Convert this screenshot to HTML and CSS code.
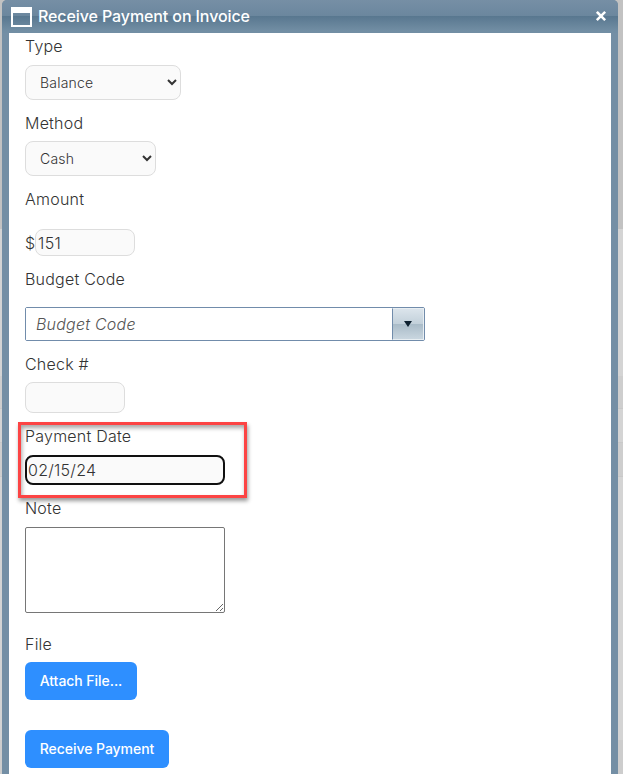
FILE: index.html
```html
<!DOCTYPE html>
<html lang="en">
<head>
<meta charset="utf-8">
<title>Receive Payment on Invoice</title>
<link rel="stylesheet" href="styles.css">
</head>
<body>
<div class="window">
  <header class="titlebar">
    <svg class="window-icon" width="21" height="20" viewBox="0 0 21 20"><path fill="#fff" fill-rule="evenodd" d="M0 0h21v20H0zM2 6v12h17V6z"/></svg>
    <h1 class="title">Receive Payment on Invoice</h1>
    <svg class="close" width="12" height="12" viewBox="0 0 12 12"><path d="M2.7 2.7l6.6 6.6M9.3 2.7L2.7 9.3" stroke="#fff" stroke-width="2.5" stroke-linecap="square"/></svg>
  </header>
  <form class="content">
    <div class="field type"><label>Type</label><select class="select wide"><option>Balance</option></select></div>
    <div class="field method"><label>Method</label><select class="select"><option>Cash</option></select></div>
    <div class="field amount"><label>Amount</label><div class="money"><span>$</span><input class="input" value="151"></div></div>
    <div class="field budget"><label>Budget Code</label>
      <div class="combo"><input class="combo-input" placeholder="Budget Code"><span class="combo-button"><svg width="8" height="6" viewBox="0 0 8 6"><path d="M0 0h8L4 6z" fill="#0d2030"/></svg></span></div>
    </div>
    <div class="field check"><label>Check #</label><input class="input"></div>
    <div class="field date"><label>Payment Date</label><input class="input focused" value="02/15/24"><div class="highlight"></div></div>
    <div class="field note"><label>Note</label><textarea class="textarea"></textarea></div>
    <div class="field file"><label>File</label><button class="button attach" type="button">Attach File...</button></div>
    <button class="button submit" type="button">Receive Payment</button>
  </form>
</div>
</body>
</html>
```
FILE: styles.css
```css
* { box-sizing: border-box; }
body {
  margin: 0;
  height: 774px;
  padding: 0 5px 0 2px;
  overflow: hidden;
  background: linear-gradient(#c2c2c2 0 229px, #d4d4d4 229px 376px, #cecece 376px 408px, #c8c8c8 408px 409px, #d4d4d4 409px 442px, #c9c9c9 442px 443px, #cecece 443px 476px, #c8c8c8 476px 477px, #d4d4d4 477px 740px, #cdcdcd 740px);
  font-family: Inter, "Liberation Sans", sans-serif;
  font-size: 16px;
  color: #333;
}
.window {
  height: 774px;
  padding: 0 7px;
  background: #748fa5;
  border-radius: 5px 5px 0 0;
}
.titlebar {
  display: flex;
  align-items: center;
  height: 33px;
  margin: 0 -7px;
  padding: 0 11px 0 9px;
  border-radius: 5px 5px 0 0;
  background: linear-gradient(#768fa5 0, #6b879e 16px, #58778f 16px, #728ea4 31px);
}
.window-icon { margin-right: 6px; }
.close { margin-bottom: 2px; }
.title {
  flex: 1;
  margin: 0;
  padding-bottom: 2px;
  font-size: 16px;
  font-weight: 500;
  line-height: 24px;
  letter-spacing: -0.1px;
  color: #fff;
}
.content {
  height: 741px;
  padding: 2px 16px 0;
  background: #fff;
}
.field {
  display: flex;
  flex-direction: column;
  align-items: flex-start;
  margin-bottom: 12px;
}
label {
  height: 24px;
  margin-bottom: 5px;
  line-height: 22px;
  font-weight: 300;
  letter-spacing: 0.22px;
}
.type label, .date label, .note label { margin-bottom: 6px; }
.amount label { margin-bottom: 17px; }
.budget label { margin-bottom: 15px; }
.select, .input {
  margin: 0;
  border: 1px solid #ddd;
  border-radius: 8px;
  background: #fafafa;
  color: #333;
  font-family: inherit;
}
.select {
  width: 131px;
  height: 35px;
  padding: 0 1px 0 10px;
  font-size: 14px;
  font-weight: 300;
  letter-spacing: 0.2px;
}
.wide { width: 156px; }
.input {
  width: 100px;
  height: 31px;
  padding: 0 2px;
  font-size: 16px;
  font-weight: 300;
  letter-spacing: 0.25px;
}
.money { display: flex; align-items: center; font-weight: 300; }
.money .input { height: 27px; }
.combo {
  display: flex;
  width: 400px;
  height: 34px;
  border: 1px solid #718cab;
  border-radius: 2px;
}
.combo-input {
  flex: 1;
  min-width: 0;
  padding: 0 10px;
  border: 0;
  font: italic 300 16px Inter, sans-serif;
  letter-spacing: 0.22px;
}
.combo-input::placeholder { color: #555; }
.combo-button {
  display: flex;
  align-items: center;
  justify-content: center;
  width: 32px;
  border: 1px solid #e8eef2;
  border-left: 1px solid #718cab;
  background: linear-gradient(#dbe4eb, #c2d0da 50%, #a9bbc8 50%, #c9d6df);
}
.date { position: relative; }
.focused {
  width: 200px;
  height: 30px;
  border: 2px solid #101010;
  padding: 0 1px;
}
.highlight {
  position: absolute;
  left: -7px;
  top: -3px;
  width: 229px;
  height: 76px;
  border: 3px solid #fc4444;
  box-shadow: 1px 3px 4px rgba(0, 0, 0, 0.4), inset 1px 3px 4px rgba(0, 0, 0, 0.35);
}
.textarea {
  width: 200px;
  height: 86px;
  margin: 0;
  border: 1px solid #767676;
  border-radius: 2px;
}
.note { margin-bottom: 20px; }
.button {
  height: 38px;
  padding: 0 0 1px;
  border: 0;
  border-radius: 6px;
  background: #2e8fff;
  color: #fff;
  font: 500 14px Inter, sans-serif;
  letter-spacing: -0.05px;
}
.attach { width: 112px; }
.file { margin-bottom: 30px; }
.submit { width: 144px; }
```
